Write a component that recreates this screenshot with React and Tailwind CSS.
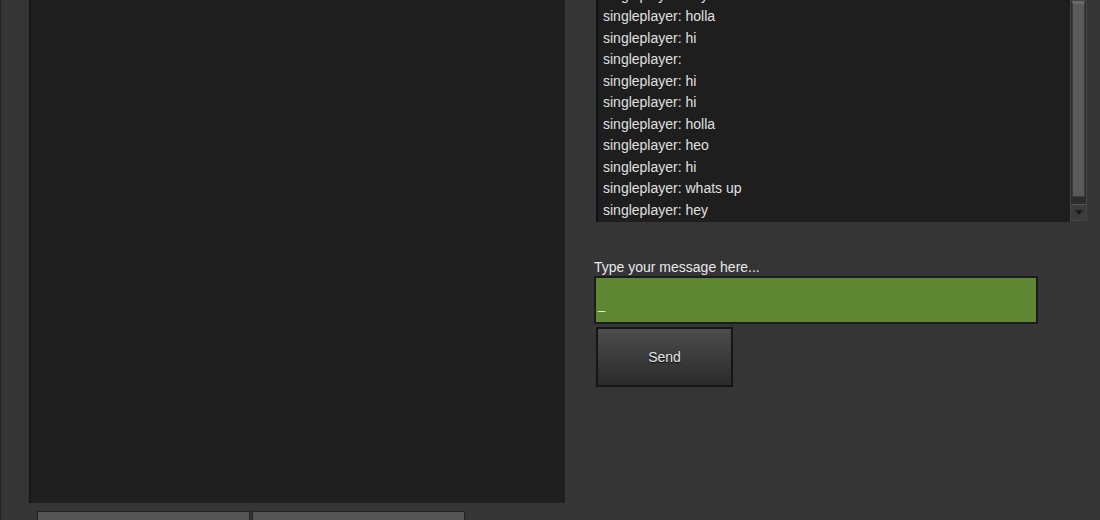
const lines = [
  'singleplayer: hey',
  'singleplayer: holla',
  'singleplayer: hi',
  'singleplayer:',
  'singleplayer: hi',
  'singleplayer: hi',
  'singleplayer: holla',
  'singleplayer: heo',
  'singleplayer: hi',
  'singleplayer: whats up',
  'singleplayer: hey',
];

export default function App() {
  return (
    <div className="w-[1100px] h-[520px] overflow-hidden bg-[#353535] border-l border-[#222] flex text-[14px] text-[#e0e0e0]" style={{ fontFamily: '"Liberation Sans", Arial, sans-serif' }}>
      {/* left area */}
      <div className="ml-[28px] w-[536px] flex flex-col shrink-0">
        <div className="h-[503px] shrink-0 bg-[#1f1f1f] border-l-2 border-[#161616]" />
        <div className="flex gap-[2px] mt-[8px] ml-[8px] shrink-0">
          <div className="w-[213px] h-[20px] bg-[#555] border border-[#222] border-b-0" />
          <div className="w-[213px] h-[20px] bg-[#555] border border-[#222] border-b-0" />
        </div>
      </div>

      {/* chat area */}
      <div className="ml-[31px] flex flex-col">
        <div className="flex h-[222px]">
          <div className="w-[474px] h-full bg-[#1e1e1e] border-l-2 border-[#111] overflow-hidden pl-[5px]">
            <div className="mt-[-15.5px] leading-[21.5px]">
              {lines.map((l, i) => (
                <div key={i}>{l}</div>
              ))}
            </div>
          </div>
          <div className="w-[17px] h-[221px] bg-[#2c2c2c] border border-[#444] flex flex-col">
            <div className="mx-[1px] h-[196px] bg-[#5a5a5a] border-t-[3px] border-[#6a6a6a] border-x border-b border-x-[#3a3a3a] border-b-[#3a3a3a]" />
            <div className="flex-1" />
            <div className="h-[16px] bg-[#3b3b3b] border-t border-[#555] flex items-center justify-center">
              <svg width="8" height="5" viewBox="0 0 8 5"><path d="M0 0h8L4 5z" fill="#1a1a1a" /></svg>
            </div>
          </div>
        </div>

        <div className="mt-[37px] -ml-[2px] text-[14px] leading-[16px] text-[#e8e8e8]">Type your message here...</div>
        <div className="-ml-[2px] mt-[1px] w-[444px] h-[48px] bg-[#5f8631] border-2 border-[#1c1c1c] flex items-end pb-[10px] pl-[2px] text-[#eee] text-[13px] leading-[14px]">_</div>
        <button className="mt-[3px] w-[137px] h-[60px] bg-gradient-to-b from-[#4c4c4c] to-[#2b2b2b] border-2 border-[#151515] text-[#e8e8e8] text-[14px] [text-shadow:0_1px_1px_#000]">Send</button>
      </div>
    </div>
  );
}
